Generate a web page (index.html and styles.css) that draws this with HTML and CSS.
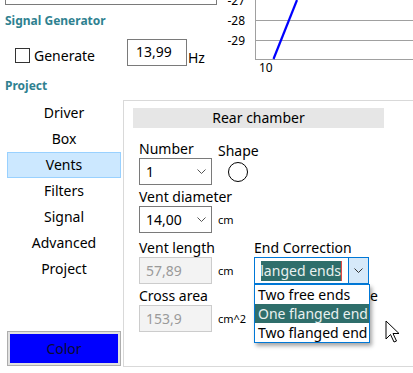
FILE: index.html
```html
<!DOCTYPE html>
<html lang="en">
<head>
    <meta charset="UTF-8">
    <title>Vent Designer</title>
    <link rel="stylesheet" href="styles.css">
</head>
<body>
<div class="app">
    <div class="top">
        <div class="sg">
            <div class="prev-box"></div>
            <h3 class="group-title">Signal Generator</h3>
            <div class="gen-row">
                <label class="check"><span class="box"></span>Generate</label>
                <div class="hz-input">13,99</div>
                <span class="hz-unit">Hz</span>
            </div>
            <h3 class="group-title project-title">Project</h3>
        </div>
        <svg class="chart" width="198" height="100" viewBox="0 0 198 100">
            <g fill="#000" font-family="Noto Sans, sans-serif" font-size="12" text-anchor="end">
                <text x="30" y="5">-27</text>
                <text x="30" y="25">-28</text>
                <text x="30" y="45">-29</text>
            </g>
            <line x1="40" y1="20.5" x2="198" y2="20.5" stroke="#a0a0a0"/>
            <line x1="40" y1="40.5" x2="198" y2="40.5" stroke="#a0a0a0"/>
            <line x1="40" y1="59.5" x2="198" y2="59.5" stroke="#a0a0a0"/>
            <line x1="40.5" y1="0" x2="40.5" y2="60" stroke="#a0a0a0"/>
            <line x1="58.5" y1="59" x2="82" y2="0" stroke="#0000ff" stroke-width="2.2"/>
            <text x="44" y="72" font-family="Noto Sans, sans-serif" font-size="12" fill="#000">10</text>
        </svg>
    </div>

    <div class="main">
        <nav class="nav">
            <div class="nav-item">Driver</div>
            <div class="nav-item">Box</div>
            <div class="nav-item active">Vents</div>
            <div class="nav-item">Filters</div>
            <div class="nav-item">Signal</div>
            <div class="nav-item">Advanced</div>
            <div class="nav-item">Project</div>
            <div class="color-btn"><span>Color</span></div>
        </nav>

        <section class="panel">
            <div class="panel-head">Rear chamber</div>
            <div class="fields">
                <div class="lbl c1">Number</div>
                <div class="lbl c23 shape-lbl">Shape</div>

                <div class="select c1">1 <svg width="9" height="5" viewBox="0 0 9 5"><path d="M0.5 0.5 L4.5 4.5 L8.5 0.5" fill="none" stroke="#555"/></svg></div>
                <div class="shape-cell c2"><span class="circle"></span></div>

                <div class="lbl c12">Vent diameter</div>

                <div class="select c1">14,00 <svg width="9" height="5" viewBox="0 0 9 5"><path d="M0.5 0.5 L4.5 4.5 L8.5 0.5" fill="none" stroke="#555"/></svg></div>
                <div class="unit c2">cm</div>

                <div class="lbl c12">Vent length</div>
                <div class="lbl c3">End Correction</div>

                <div class="input disabled c1">57,89</div>
                <div class="unit c2">cm</div>
                <div class="combo c3">
                    <div class="combo-text"><span class="sel-text">Two flanged ends</span></div>
                    <div class="combo-btn"><svg width="9" height="5" viewBox="0 0 9 5"><path d="M0.5 0.5 L4.5 4.5 L8.5 0.5" fill="none" stroke="#333"/></svg></div>
                    <ul class="dropdown">
                        <li>Two free ends</li>
                        <li class="hl">One flanged end</li>
                        <li>Two flanged end</li>
                    </ul>
                </div>

                <div class="lbl c12">Cross area</div>
                <div class="lbl c3 behind">Termination shape</div>

                <div class="input disabled c1">153,9</div>
                <div class="unit c2">cm^2</div>
            </div>
        </section>
    </div>

    <!-- mouse pointer over the open list -->
    <svg class="cursor" width="16" height="24" viewBox="0 0 16 24">
        <path d="M1 1 L1 19 L5.5 14.5 L9 22 L11.5 21 L8 13.5 L14 13.5 Z" fill="#fff" stroke="#000" stroke-width="1"/>
    </svg>
</div>
</body>
</html>
```

FILE: styles.css
```css
body {
    margin: 0;
    font-family: "Noto Sans", sans-serif;
    font-size: 14px;
    color: #000;
    background: #fff;
}
.app {
    position: relative;
    width: 413px;
    height: 373px;
    overflow: hidden;
}
.top {
    display: flex;
    height: 100px;
}
.sg {
    width: 215px;
}
.prev-box {
    margin-left: 5px;
    width: 210px;
    height: 4px;
    border: 1px solid #7a7a7a;
    border-top: none;
}
.group-title {
    margin: 7px 0 0 5px;
    font-size: 12px;
    line-height: 18px;
    font-weight: 700;
    color: #2f8190;
}
.project-title {
    margin-top: 11px;
}
.gen-row {
    display: flex;
    align-items: center;
    height: 27px;
    margin-top: 9px;
}
.check {
    display: flex;
    align-items: center;
    gap: 4px;
    margin: 6px 0 0 15px;
    font-size: 14px;
}
.box {
    width: 13px;
    height: 13px;
    border: 1px solid #333;
    background: #fff;
}
.hz-input {
    box-sizing: border-box;
    width: 60px;
    height: 27px;
    margin-left: 32px;
    padding: 1px 0 0 8px;
    border: 1px solid #7a7a7a;
    line-height: 22px;
}
.hz-unit {
    margin: 10px 0 0 1px;
}
.chart {
    display: block;
}
.main {
    display: flex;
    height: 267px;
}
.nav {
    box-sizing: border-box;
    width: 123px;
    padding: 0 0 1px 7px;
    display: flex;
    flex-direction: column;
}
.nav-item {
    box-sizing: border-box;
    width: 114px;
    height: 26px;
    line-height: 26px;
    text-align: center;
}
.nav-item.active {
    background: #cce8ff;
    border: 1px solid #99d1ff;
    line-height: 24px;
}
.color-btn {
    box-sizing: border-box;
    margin-top: auto;
    width: 114px;
    height: 35px;
    padding: 2px;
    border: 1px solid #adadad;
    background: #e1e1e1;
}
.color-btn span {
    display: block;
    height: 100%;
    background: #0000ff;
    color: #0c0c30;
    text-align: center;
    line-height: 29px;
}
.panel {
    flex: 1;
    border: 1px solid #d9d9d9;
    border-right: none;
}
.panel-head {
    margin: 7px 29px 0 9px;
    height: 20px;
    line-height: 20px;
    background: #e6e6e6;
    text-align: center;
}
.fields {
    display: grid;
    grid-template-columns: 73px 42px 115px;
    grid-template-rows: 21px 27px 21px 27px 24px 27px 21px 27px;
    margin: 9px 0 0 15px;
}
.c1 { grid-column: 1; }
.c2 { grid-column: 2; }
.c3 { grid-column: 3; }
.c12 { grid-column: 1 / 3; }
.c23 { grid-column: 2 / 4; }
.lbl {
    align-self: end;
    line-height: 19px;
    white-space: nowrap;
}
.shape-lbl {
    padding-left: 6px;
    margin-bottom: -2px;
}
.select {
    box-sizing: border-box;
    display: flex;
    align-items: center;
    justify-content: space-between;
    padding: 0 5px 0 6px;
    border: 1px solid #7a7a7a;
    background: #fff;
    font-size: 14px;
}
.shape-cell {
    display: flex;
    align-items: center;
    padding-left: 16px;
}
.circle {
    width: 18px;
    height: 18px;
    border: 1px solid #000;
    border-radius: 50%;
}
.unit {
    align-self: center;
    padding-left: 6px;
    font-size: 11px;
}
.input {
    box-sizing: border-box;
    padding-left: 6px;
    line-height: 25px;
    border: 1px solid #cccccc;
    font-size: 14px;
}
.input.disabled {
    background: #f3f3f3;
    color: #9a9a9a;
}
.combo {
    position: relative;
    box-sizing: border-box;
    display: flex;
    border: 1px solid #0078d7;
    background: #fff;
}
.combo-text {
    flex: 1;
    display: flex;
    align-items: center;
    padding-left: 6px;
}
.sel-text {
    display: flex;
    justify-content: flex-end;
    width: 80px;
    height: 20px;
    overflow: hidden;
    white-space: nowrap;
    line-height: 20px;
    font-size: 14px;
    background: #2f6e6b;
    color: #e9f1f0;
    border-right: 1px solid #e04848;
}
.combo-btn {
    width: 19px;
    display: flex;
    align-items: center;
    justify-content: center;
    background: #d6e9f9;
    border-left: 1px solid #0078d7;
}
.dropdown {
    position: absolute;
    top: 100%;
    left: -1px;
    z-index: 2;
    box-sizing: border-box;
    width: 116px;
    margin: 1px 0 0;
    padding: 0;
    list-style: none;
    background: #fff;
    border: 1px solid #0078d7;
    box-shadow: 2px 3px 4px rgba(0,0,0,0.35);
}
.dropdown li {
    height: 19px;
    line-height: 19px;
    padding-left: 3px;
    font-size: 14px;
    white-space: nowrap;
    overflow: hidden;
}
.dropdown li.hl {
    background: #2f6e6b;
    color: #e9f1f0;
}
.behind {
    padding-left: 1px;
}
.cursor {
    position: absolute;
    left: 385px;
    top: 320px;
}
```
